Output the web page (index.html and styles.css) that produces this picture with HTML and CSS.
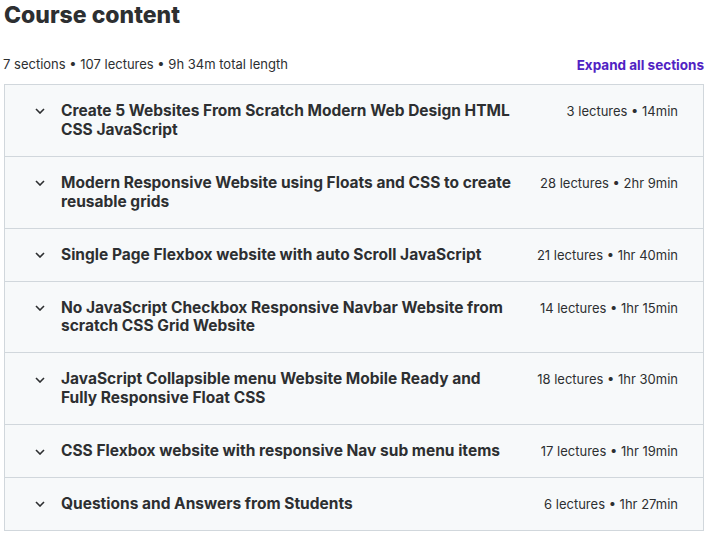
FILE: index.html
```html
<!DOCTYPE html>
<html lang="en">
<head>
    <meta charset="UTF-8">
    <meta name="viewport" content="width=device-width, initial-scale=1.0">
    <title>Course content</title>
    <link rel="stylesheet" href="styles.css">
</head>
<body>
    <div class="curriculum">
        <h2 class="title">Course content</h2>
        <div class="summary">
            <span>7 sections &bull; 107 lectures &bull; 9h 34m total length</span>
            <button class="expand">Expand all sections</button>
        </div>

        <div class="sections">
            <div class="section">
                <span class="chevron"><svg viewBox="0 0 10 6" width="10" height="6"><path d="M1 1l4 4 4-4" fill="none" stroke="currentColor" stroke-width="1.6"/></svg></span>
                <span class="section-title">Create 5 Websites From Scratch Modern Web Design HTML CSS JavaScript</span>
                <span class="section-meta">3 lectures &bull; 14min</span>
            </div>
            <div class="section">
                <span class="chevron"><svg viewBox="0 0 10 6" width="10" height="6"><path d="M1 1l4 4 4-4" fill="none" stroke="currentColor" stroke-width="1.6"/></svg></span>
                <span class="section-title">Modern Responsive Website using Floats and CSS to create reusable grids</span>
                <span class="section-meta">28 lectures &bull; 2hr 9min</span>
            </div>
            <div class="section">
                <span class="chevron"><svg viewBox="0 0 10 6" width="10" height="6"><path d="M1 1l4 4 4-4" fill="none" stroke="currentColor" stroke-width="1.6"/></svg></span>
                <span class="section-title">Single Page Flexbox website with auto Scroll JavaScript</span>
                <span class="section-meta">21 lectures &bull; 1hr 40min</span>
            </div>
            <div class="section">
                <span class="chevron"><svg viewBox="0 0 10 6" width="10" height="6"><path d="M1 1l4 4 4-4" fill="none" stroke="currentColor" stroke-width="1.6"/></svg></span>
                <span class="section-title">No JavaScript Checkbox Responsive Navbar Website from scratch CSS Grid Website</span>
                <span class="section-meta">14 lectures &bull; 1hr 15min</span>
            </div>
            <div class="section">
                <span class="chevron"><svg viewBox="0 0 10 6" width="10" height="6"><path d="M1 1l4 4 4-4" fill="none" stroke="currentColor" stroke-width="1.6"/></svg></span>
                <span class="section-title">JavaScript Collapsible menu Website Mobile Ready and Fully Responsive Float CSS</span>
                <span class="section-meta">18 lectures &bull; 1hr 30min</span>
            </div>
            <div class="section">
                <span class="chevron"><svg viewBox="0 0 10 6" width="10" height="6"><path d="M1 1l4 4 4-4" fill="none" stroke="currentColor" stroke-width="1.6"/></svg></span>
                <span class="section-title">CSS Flexbox website with responsive Nav sub menu items</span>
                <span class="section-meta">17 lectures &bull; 1hr 19min</span>
            </div>
            <div class="section">
                <span class="chevron"><svg viewBox="0 0 10 6" width="10" height="6"><path d="M1 1l4 4 4-4" fill="none" stroke="currentColor" stroke-width="1.6"/></svg></span>
                <span class="section-title">Questions and Answers from Students</span>
                <span class="section-meta">6 lectures &bull; 1hr 27min</span>
            </div>
        </div>
    </div>
</body>
</html>
```

FILE: styles.css
```css
body {
    margin: 0;
    padding: 0 3px 0 4px;
    font-family: Inter, "Noto Sans", sans-serif;
    color: #2d2f31;
    background-color: #fff;
}

.title {
    margin: 0;
    padding-top: 1px;
    font-size: 23px;
    line-height: 28px;
    font-weight: 800;
}

.summary {
    display: flex;
    justify-content: space-between;
    align-items: flex-end;
    margin-top: 26px;
    margin-bottom: 11px;
    font-size: 13px;
    line-height: 18px;
}

.summary span {
    margin-left: -1px;
}

.expand {
    background: none;
    border: none;
    padding: 0;
    font-family: inherit;
    font-size: 13.5px;
    font-weight: 700;
    color: #5022c3;
    cursor: pointer;
}

.sections {
    border: 1px solid #d1d7dc;
    border-bottom: none;
}

.section {
    display: flex;
    align-items: flex-start;
    padding: 17px 25px 16.2px 30px;
    background-color: #f7f9fa;
    border-bottom: 1px solid #d1d7dc;
}

.chevron {
    display: flex;
    align-items: center;
    height: 18.8px;
    width: 26px;
    flex-shrink: 0;
    color: #2d2f31;
}

.section-title {
    flex: 1;
    font-size: 15.5px;
    line-height: 18.8px;
    font-weight: 700;
    padding-right: 27px;
}

.section-meta {
    font-size: 13px;
    line-height: 18.8px;
    white-space: nowrap;
}
```
